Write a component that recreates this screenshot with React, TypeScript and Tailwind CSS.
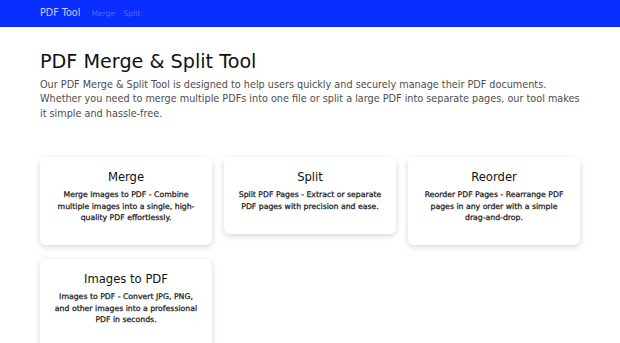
const tools = [
  {
    title: "Merge",
    text: "Merge Images to PDF - Combine multiple images into a single, high-quality PDF effortlessly.",
  },
  {
    title: "Split",
    text: "Split PDF Pages - Extract or separate PDF pages with precision and ease.",
  },
  {
    title: "Reorder",
    text: "Reorder PDF Pages - Rearrange PDF pages in any order with a simple drag-and-drop.",
  },
  {
    title: "Images to PDF",
    text: "Images to PDF - Convert JPG, PNG, and other images into a professional PDF in seconds.",
  },
];

function ToolCard({ title, text }: { title: string; text: string }) {
  return (
    <div className="bg-white rounded-[6px] shadow-[0_2px_6px_rgba(0,0,0,0.16)] px-[14px] pt-[13px] pb-[12px] text-center cursor-pointer">
      <h5 className="text-[11.6px] leading-[14px] text-[#111] mb-[5px]">{title}</h5>
      <p className="text-[7.75px] leading-[11.4px] text-[#1a1a1a] [-webkit-text-stroke:0.25px_#1a1a1a] mb-[10px]">
        {text}
      </p>
    </div>
  );
}

export default function App() {
  return (
    <div className="min-h-screen bg-white font-['DejaVu_Sans',sans-serif]">
      <nav className="h-[27px] bg-[#0a2eff] flex items-center px-[40px]">
        <span className="text-[9.6px] text-[#c3cdff] mr-[11px]">PDF Tool</span>
        <span className="text-[7.7px] text-[#4a6aff] mr-[8px]">Merge</span>
        <span className="text-[7.7px] text-[#4a6aff]">Split</span>
      </nav>
      <main className="px-[40px] pt-[23px]">
        <h1 className="text-[19.2px] leading-[24px] text-[#111] mb-[4px]">PDF Merge &amp; Split Tool</h1>
        <p className="text-[9.68px] leading-[14.4px] text-[#4d4d4d]">
          Our PDF Merge &amp; Split Tool is designed to help users quickly and securely manage their PDF documents.
          Whether you need to merge multiple PDFs into one file or split a large PDF into separate pages, our tool
          makes it simple and hassle-free.
        </p>
        <div className="grid grid-cols-3 gap-x-[12px] gap-y-[14px] items-start mt-[36px]">
          {tools.map((t) => (
            <ToolCard key={t.title} title={t.title} text={t.text} />
          ))}
        </div>
      </main>
    </div>
  );
}
